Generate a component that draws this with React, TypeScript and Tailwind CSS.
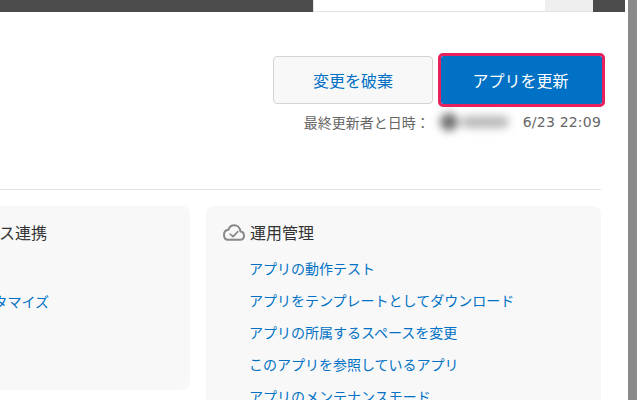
const font = "font-['Noto_Sans_CJK_JP','Liberation_Sans',sans-serif]"

const LINKS = [
  'アプリの動作テスト',
  'アプリをテンプレートとしてダウンロード',
  'アプリの所属するスペースを変更',
  'このアプリを参照しているアプリ',
  'アプリのメンテナンスモード',
]

function CloudCheckIcon() {
  return (
    <svg width="22" height="17" viewBox="0 0 22 17" fill="none" className="shrink-0">
      <path
        d="M5 15.8h12c2.600 0 4-1.900 4-4.100 0-2.200-1.400-3.900-3.600-4.200C17 3.800 14.500 1.200 11.300 1.200c-2.800 0-5 1.700-5.900 4.500C2.800 6 1 8.200 1 10.800c0 2.900 1.600 5 4 5z"
        stroke="#888888"
        strokeWidth="2"
        strokeLinejoin="round"
      />
      <path d="M7 10l3 2.600 4.800-5" stroke="#888888" strokeWidth="1.600" strokeLinecap="round" strokeLinejoin="round" />
    </svg>
  )
}

export default function App() {
  return (
    <div className={`flex h-[400px] w-[640px] overflow-hidden bg-white ${font}`}>
      <div className="flex w-[625px] shrink-0 flex-col">
        <div className="flex h-3 shrink-0 bg-[#4b4b4b]">
          <div className="ml-[313px] w-[232px] border-b border-l border-[#e3e3e3] bg-white" />
          <div className="w-12 border-b border-[#e3e3e3] bg-[#efefef]" />
        </div>

        <div className="mr-6 flex flex-col items-end pt-11">
          <div className="-mr-px flex items-center gap-2">
            <button className="h-12 w-40 rounded-[4px] border border-[#d4d4d4] bg-[#f8f8f8] text-base text-[#0071c5]">
              変更を破棄
            </button>
            <button className="h-12 w-[161px] rounded-[2px] bg-[#0071c5] pr-[2px] text-base text-white outline-[3px] outline-[#e6215b]">
              アプリを更新
            </button>
          </div>
          <div className="mt-2 flex h-5 items-center text-sm text-[#666666]">
            <span>最終更新者と日時：</span>
            <div className="ml-[10px] flex w-[70px] items-center gap-[3px] blur-[4px]">
              <span className="h-[18px] w-[18px] rounded-full bg-[#707070]" />
              <span className="h-3 w-[48px] rounded-full bg-[#b8b8b8]" />
            </div>
            <span className="ml-[13px] font-['DejaVu_Sans',sans-serif] tracking-[0.2px]">6/23 22:09</span>
          </div>
        </div>

        <div className="mr-6 mt-[57px] h-px shrink-0 bg-[#e3e3e3]" />

        <div className="mr-6 mt-4 flex gap-4">
          <div className="h-[184px] w-[190px] shrink-0 overflow-hidden rounded-r-lg bg-[#f8f8f8] pt-[15px]">
            <div className="flex w-[49px] flex-col items-end whitespace-nowrap">
              <div className="mr-[2px] h-[22px] text-base leading-[22px] text-[#333333]">外部サービス連携</div>
              <div className="mt-[48px] text-sm leading-5 text-[#0071c5]">カスタマイズ</div>
            </div>
          </div>

          <div className="h-[260px] flex-1 rounded-t-lg bg-[#f8f8f8] pl-[17px] pt-[15px]">
            <div className="flex h-[22px] items-center gap-[5px] text-base leading-[22px] text-[#333333]">
              <CloudCheckIcon />
              <span>運用管理</span>
            </div>
            <ul className="mt-[15px] flex flex-col gap-3 pl-[26px] text-sm leading-5 text-[#0071c5]">
              {LINKS.map((l) => (
                <li key={l} className="whitespace-nowrap">
                  {l}
                </li>
              ))}
            </ul>
          </div>
        </div>
      </div>
      <div className="ml-[3px] h-full w-[9px] shrink-0 bg-[#8a8a8a]" />
    </div>
  )
}
